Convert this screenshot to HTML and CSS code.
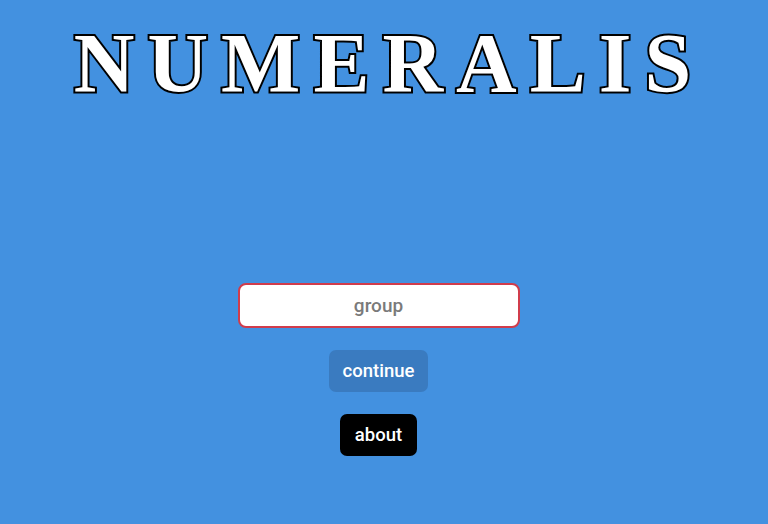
FILE: index.html
```html
<!DOCTYPE html>
<html>
<head>
<meta charset="utf-8">
<link rel="stylesheet" href="styles.css">
</head>
<body>
<div class="page">
  <h1 class="title">NUMERALIS</h1>
  <div class="form">
    <div class="field">group</div>
    <button class="btn btn-continue">continue</button>
    <button class="btn btn-about">about</button>
  </div>
</div>
</body>
</html>
```
FILE: styles.css
```css
html, body {
  margin: 0;
  padding: 0;
  background: #4391e0;
  height: 100%;
}
.page {
  display: flex;
  flex-direction: column;
  align-items: center;
  height: 524px;
}
.title {
  margin: 14px 0 0 10px;
  font-family: "Liberation Serif", serif;
  font-weight: bold;
  font-size: 84px;
  line-height: 100px;
  letter-spacing: 13px;
  color: #fff;
  -webkit-text-stroke: 4px #000;
  paint-order: stroke fill;
}
.form {
  margin-top: 169px;
  margin-right: 11px;
  display: flex;
  flex-direction: column;
  align-items: center;
}
.field {
  box-sizing: border-box;
  width: 282px;
  height: 45px;
  border: 2px solid #d13c4b;
  border-radius: 8px;
  background: #fff;
  color: #7a7a7a;
  font-family: Roboto, sans-serif;
  font-weight: 500;
  font-size: 19px;
  display: flex;
  align-items: center;
  justify-content: center;
}
.btn {
  border: none;
  border-radius: 7px;
  color: #fff;
  font-family: Roboto, sans-serif;
  font-weight: 500;
  font-size: 18.5px;
  height: 42px;
  padding: 0 14px;
}
.btn-continue {
  margin-top: 22px;
  background: #3a7bc0;
}
.btn-about {
  margin-top: 22px;
  padding: 0 15px;
  background: #000;
}
```
